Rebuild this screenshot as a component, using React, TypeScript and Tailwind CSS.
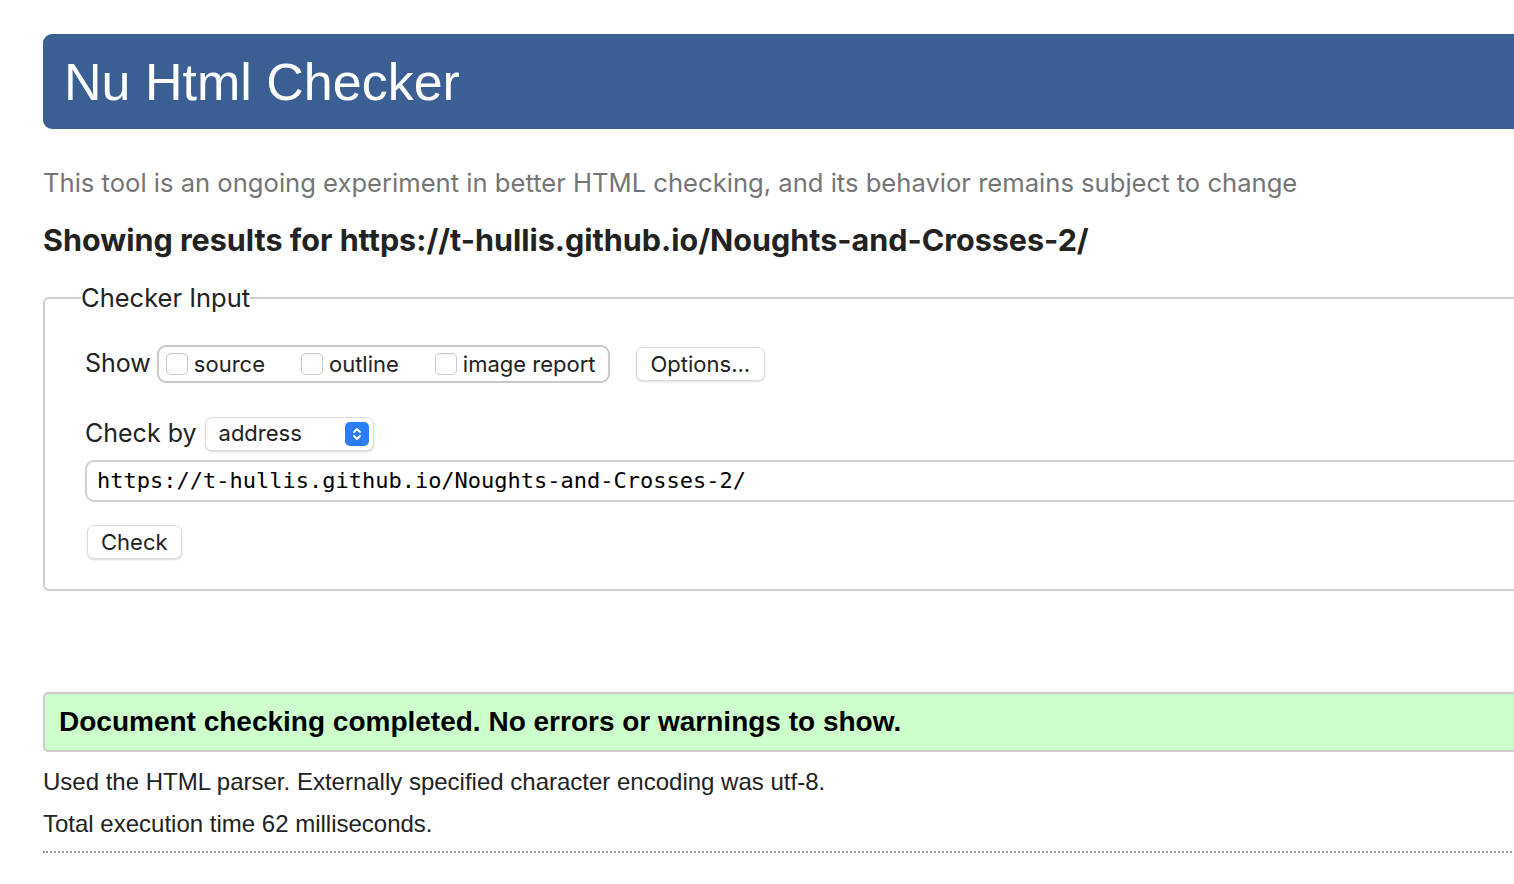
import React from "react";

const sys = { fontFamily: "Inter, 'Noto Sans', sans-serif" };
const arial = { fontFamily: "'Liberation Sans', Arial, sans-serif" };

function Checkbox({ label }: { label: string }) {
  return (
    <label className="flex items-center gap-[6px]">
      <span className="w-[22px] h-[22px] rounded-[5px] border border-[#c8c8c8] bg-white shadow-[inset_0_1px_1px_rgba(0,0,0,0.05)]" />
      <span>{label}</span>
    </label>
  );
}

function StepperIcon() {
  return (
    <span className="w-[24px] h-[24px] rounded-[5px] bg-[#2b7cf6] flex items-center justify-center">
      <svg width="12" height="16" viewBox="0 0 12 16" fill="none">
        <path d="M3 6 L6 3 L9 6" stroke="white" strokeWidth="1.8" strokeLinecap="round" strokeLinejoin="round" />
        <path d="M3 10 L6 13 L9 10" stroke="white" strokeWidth="1.8" strokeLinecap="round" strokeLinejoin="round" />
      </svg>
    </span>
  );
}

export default function App() {
  return (
    <div className="w-full overflow-hidden bg-white min-h-[884px]">
      <div className="w-[1560px] pl-[43px] pt-[34px]">
        {/* Header */}
        <div className="h-[95px] bg-[#3b5e93] rounded-l-[9px] flex items-center pl-[21px]">
          <h1 className="text-white text-[52px] leading-none" style={arial}>
            Nu Html Checker
          </h1>
        </div>

        <p className="mt-[39px] text-[25.6px] leading-[30px] text-[#757575]" style={sys}>
          This tool is an ongoing experiment in better HTML checking, and its behavior remains subject to change
        </p>

        <h2 className="mt-[24px] text-[30.5px] leading-[36px] font-bold text-[#222]" style={sys}>
          Showing results for https://t-hullis.github.io/Noughts-and-Crosses-2/
        </h2>

        {/* Checker input */}
        <fieldset
          className="mt-[23px] border-2 border-[#cfcfcf] rounded-l-[6px] pl-[40px] pr-0 pb-[30px] text-[#222] text-[22px]"
          style={sys}
        >
          <legend className="px-0 -ml-[4px] text-[25.5px] leading-[34px]">Checker Input</legend>

          <div className="mt-[30px] flex items-center">
            <span className="text-[25px] mr-[6px]">Show</span>
            <div className="h-[38px] border-2 border-[#c9c9c9] rounded-[9px] flex items-center pl-[7px] pr-[12px] gap-[36px]">
              <Checkbox label="source" />
              <Checkbox label="outline" />
              <Checkbox label="image report" />
            </div>
            <button className="ml-[26px] h-[34px] px-[14px] rounded-[7px] bg-white border border-[#dcdcdc] shadow-[0_1px_2px_rgba(0,0,0,0.15)]">
              Options...
            </button>
          </div>

          <div className="mt-[32px] flex items-center">
            <span className="text-[25px] mr-[8px]">Check by</span>
            <div className="w-[169px] h-[34px] rounded-[7px] bg-white border border-[#dcdcdc] shadow-[0_1px_2px_rgba(0,0,0,0.15)] flex items-center justify-between pl-[13px] pr-[4px]">
              <span>address</span>
              <StepperIcon />
            </div>
          </div>

          <div className="mt-[7px] h-[42px] border-2 border-[#cfcfcf] rounded-l-[9px] flex items-center pl-[10px]">
            <span className="text-[22px] text-black" style={{ fontFamily: "'DejaVu Sans Mono', monospace" }}>
              https://t-hullis.github.io/Noughts-and-Crosses-2/
            </span>
          </div>

          <button className="mt-[23px] ml-[2px] h-[34px] px-[13px] rounded-[7px] bg-white border border-[#dcdcdc] shadow-[0_1px_2px_rgba(0,0,0,0.15)]">
            Check
          </button>
        </fieldset>

        {/* Result */}
        <div
          className="mt-[101px] h-[60px] bg-[#ccffcc] border-2 border-[#cccccc] rounded-l-[5px] flex items-center pl-[14px]"
          style={arial}
        >
          <span className="text-[28px] font-bold text-black">
            Document checking completed. No errors or warnings to show.
          </span>
        </div>

        <div className="text-[24px] text-[#222]" style={arial}>
          <p className="mt-[15px] leading-[30px]">
            Used the HTML parser. Externally specified character encoding was utf-8.
          </p>
          <p className="mt-[12px] leading-[30px]">Total execution time 62 milliseconds.</p>
        </div>
        <div className="mt-[12px] border-t-2 border-dotted border-[#999]" />
      </div>
    </div>
  );
}
